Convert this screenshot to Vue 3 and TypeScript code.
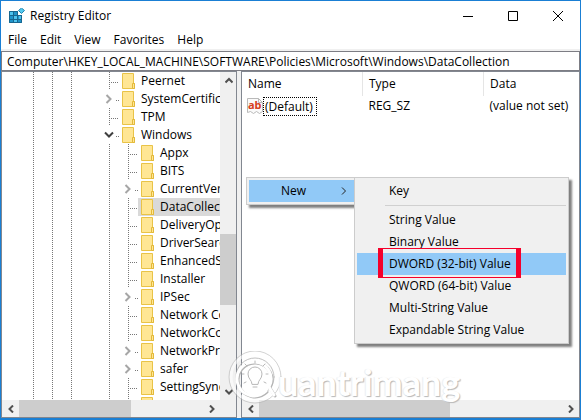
<script setup lang="ts">
import { ref } from 'vue'

interface TreeNode {
  name: string
  depth: 1 | 2
  state: 'leaf' | 'closed' | 'open'
}

const menus: string[] = ['File', 'Edit', 'View', 'Favorites', 'Help']
const address = ref('Computer\\HKEY_LOCAL_MACHINE\\SOFTWARE\\Policies\\Microsoft\\Windows\\DataCollection')
const selected = ref('DataCollection')

const nodes: TreeNode[] = [
  { name: 'Peernet', depth: 1, state: 'leaf' },
  { name: 'SystemCertificates', depth: 1, state: 'closed' },
  { name: 'TPM', depth: 1, state: 'leaf' },
  { name: 'Windows', depth: 1, state: 'open' },
  { name: 'Appx', depth: 2, state: 'leaf' },
  { name: 'BITS', depth: 2, state: 'leaf' },
  { name: 'CurrentVersion', depth: 2, state: 'closed' },
  { name: 'DataCollection', depth: 2, state: 'leaf' },
  { name: 'DeliveryOptimization', depth: 2, state: 'leaf' },
  { name: 'DriverSearching', depth: 2, state: 'leaf' },
  { name: 'EnhancedStorageDevices', depth: 2, state: 'leaf' },
  { name: 'Installer', depth: 2, state: 'leaf' },
  { name: 'IPSec', depth: 2, state: 'closed' },
  { name: 'Network Connections', depth: 2, state: 'leaf' },
  { name: 'NetworkConnectivityStatusIndicator', depth: 2, state: 'leaf' },
  { name: 'NetworkProvider', depth: 2, state: 'closed' },
  { name: 'safer', depth: 2, state: 'closed' },
  { name: 'SettingSync', depth: 2, state: 'leaf' },
  { name: 'System', depth: 2, state: 'leaf' },
]

const valueTypes: string[] = [
  'String Value',
  'Binary Value',
  'DWORD (32-bit) Value',
  'QWORD (64-bit) Value',
  'Multi-String Value',
  'Expandable String Value',
]
const activeType = 'DWORD (32-bit) Value'
</script>

<template>
  <div class="window">
    <header class="titlebar">
      <svg class="app-icon" width="16" height="16" viewBox="0 0 16 16" aria-hidden="true">
        <path d="M0 3h9v4h4v8H0z" fill="#1f93c9" />
        <path d="M1 4h3v3H1zM5 8h4v3H5zM5 12h4v2H5zM10 8h2v3h-2z" fill="#4fc4ee" />
        <path d="M.5 3.500h8v4h4v7H.5zM4.500 3v12M8.500 7v8M0 7.500h13M0 11.500h13" fill="none" stroke="#17668f" />
        <path d="M12.500 0L15.500 2.500L12.500 5.500L9.500 2.500z" fill="#53c9ef" stroke="#2386b1" />
      </svg>
      <h1>Registry Editor</h1>
      <div class="captions">
        <button type="button" aria-label="Minimize">
          <svg width="10" height="10" viewBox="0 0 10 10"><path d="M0 5.500h10" /></svg>
        </button>
        <button type="button" aria-label="Maximize">
          <svg width="10" height="10" viewBox="0 0 10 10"><path d="M.5.5h9v9h-9z" /></svg>
        </button>
        <button type="button" aria-label="Close">
          <svg width="10" height="10" viewBox="0 0 10 10"><path d="M0 0l10 10M10 0L0 10" /></svg>
        </button>
      </div>
    </header>

    <nav class="menubar">
      <button v-for="m in menus" :key="m" type="button">{{ m }}</button>
    </nav>

    <input v-model="address" class="address" type="text" aria-label="Registry path" spellcheck="false" />

    <main class="panes">
      <section class="pane tree-pane">
        <div class="tree-view">
          <ul class="tree">
            <li v-for="n in nodes" :key="n.name">
              <i class="guide line" /><i class="guide line" /><i class="guide line" /><i class="guide" />
              <i v-if="n.depth === 2" class="guide line" />
              <i v-if="n.state === 'leaf'" class="guide line branch" />
              <button v-else type="button" class="guide toggle" :class="n.state" :aria-label="'Toggle ' + n.name">
                <svg v-if="n.state === 'closed'" width="8" height="10" viewBox="0 0 8 10"><path d="M1.500 1l4 4-4 4" /></svg>
                <svg v-else width="10" height="8" viewBox="0 0 10 8"><path d="M1 1.500l4 4 4-4" /></svg>
              </button>
              <button type="button" class="node" :class="{ selected: n.name === selected }" @click="selected = n.name">
                <svg width="13" height="16" viewBox="0 0 13 16" aria-hidden="true">
                  <path d="M.5.5h11v10h1v5H.5z" fill="#ffe694" stroke="#e9c347" />
                  <path d="M10.500 15.500v-5h2v5z" fill="#ffe694" stroke="#e3b93a" />
                </svg>
                <span>{{ n.name }}</span>
              </button>
            </li>
          </ul>
          <div class="vscroll">
            <button type="button" aria-label="Scroll up">
              <svg width="8" height="8" viewBox="0 0 8 8"><path d="M.5 5.500L4 2l3.500 3.500" /></svg>
            </button>
            <div class="track"><div class="thumb" /></div>
            <button type="button" aria-label="Scroll down">
              <svg width="8" height="8" viewBox="0 0 8 8"><path d="M.5 2L4 5.500 7.500 2" /></svg>
            </button>
          </div>
        </div>
        <div class="hscroll">
          <button type="button" aria-label="Scroll left">
            <svg width="8" height="8" viewBox="0 0 8 8"><path d="M6 .5L2.500 4 6 7.500" /></svg>
          </button>
          <div class="track"><div class="thumb tree-thumb" /></div>
          <button type="button" aria-label="Scroll right">
            <svg width="8" height="8" viewBox="0 0 8 8"><path d="M2 .5L5.500 4 2 7.500" /></svg>
          </button>
          <span class="corner" />
        </div>
      </section>

      <section class="pane values-pane">
        <div class="values">
          <table>
            <thead>
              <tr><th>Name</th><th>Type</th><th>Data</th></tr>
            </thead>
            <tbody>
              <tr>
                <td>
                  <div class="value-name">
                    <svg width="16" height="16" viewBox="0 0 16 16" aria-hidden="true">
                      <path d="M.5.5h11l4 4v9l-3 2-3-2-3 2-3-2-3 1z" fill="#fafafa" stroke="#b9b9b9" />
                      <path d="M11.500.5v4h4" fill="none" stroke="#b9b9b9" />
                      <text x="1" y="11" class="ab">ab</text>
                    </svg>
                    <span class="focused">(Default)</span>
                  </div>
                </td>
                <td>REG_SZ</td>
                <td>(value not set)</td>
              </tr>
            </tbody>
          </table>
        </div>
        <div class="hscroll">
          <button type="button" aria-label="Scroll left">
            <svg width="8" height="8" viewBox="0 0 8 8"><path d="M6 .5L2.500 4 6 7.500" /></svg>
          </button>
          <div class="track"><div class="thumb values-thumb" /></div>
          <button type="button" aria-label="Scroll right">
            <svg width="8" height="8" viewBox="0 0 8 8"><path d="M2 .5L5.500 4 2 7.500" /></svg>
          </button>
        </div>
      </section>
    </main>

    <div class="popup context">
      <button type="button" class="active">
        New
        <svg width="6" height="8" viewBox="0 0 6 8"><path d="M1 .5L4.500 4 1 7.500" /></svg>
      </button>
    </div>
    <div class="popup submenu">
      <button type="button">Key</button>
      <hr />
      <button v-for="t in valueTypes" :key="t" type="button" :class="{ active: t === activeType }">{{ t }}</button>
      <span class="marker" />
    </div>

    <div class="watermark">
      <svg width="60" height="56" viewBox="0 0 60 56" aria-hidden="true">
        <g fill="none" stroke-linecap="round">
          <circle cx="27" cy="26" r="24" stroke="#fff" stroke-opacity=".6" stroke-width="3" />
          <circle cx="27" cy="26" r="26" stroke="#b4b4b4" stroke-opacity=".6" />
          <circle cx="27" cy="26" r="19" stroke="#b0b0b0" stroke-opacity=".8" />
          <path d="M38 40a17 17 0 1 1 3-4l5 8" stroke="#b4b4b4" stroke-width="3" transform="translate(1 1)" />
          <path d="M38 40a17 17 0 1 1 3-4l5 8" stroke="#fff" stroke-width="3" />
          <path d="M24 33c0-4-4-5-4-10a7 7 0 0 1 14 0c0 5-4 6-4 10zM25 36h4M27 12v-2M19 15l-2-2M35 15l2-2M16 23h-2M38 23h2M18 31l-2 1M36 31l2 1" stroke="#b8b8b8" />
        </g>
      </svg>
      <span>uantrimang</span>
    </div>
  </div>
</template>

<style>
body {
  margin: 0;
}
</style>

<style scoped>
.window {
  position: relative;
  box-sizing: border-box;
  height: 100vh;
  display: flex;
  flex-direction: column;
  border: 1px solid #1a7fd4;
  border-bottom-width: 2px;
  overflow: hidden;
  background: #fff;
  color: #000;
  font: 12px/18px "Open Sans", "Noto Sans", sans-serif;
}
button {
  border: 0;
  padding: 0;
  margin: 0;
  background: none;
  color: inherit;
  font: inherit;
}
svg {
  flex: none;
  display: block;
}
.titlebar {
  display: flex;
  align-items: center;
  height: 29px;
  padding-left: 8px;
}
h1 {
  flex: 1;
  margin: 0 0 0 5px;
  font-size: 12px;
  line-height: 18px;
  font-weight: 400;
}
.captions {
  display: flex;
}
.captions button {
  width: 45px;
  height: 29px;
  display: grid;
  place-items: center;
}
.captions path {
  fill: none;
  stroke: #000;
}
.menubar {
  display: flex;
  gap: 13px;
  height: 18px;
  padding: 1px 7px 0;
  border-bottom: 2px solid #f0f0f0;
}
.menubar button {
  line-height: 18px;
}
.address {
  box-sizing: border-box;
  width: 100%;
  height: 20px;
  border: 1px solid #7d7d84;
  padding: 0 5px;
  outline: 0;
  background: #fff;
  color: #000;
  font: inherit;
}
.panes {
  flex: 1;
  min-height: 0;
  display: flex;
  gap: 4px;
  background: #f0f0f0;
}
.pane {
  box-sizing: border-box;
  display: flex;
  flex-direction: column;
  min-height: 0;
  border: 1px solid #828790;
  background: #fff;
}
.tree-pane {
  width: 236px;
  flex: none;
}
.values-pane {
  flex: 1;
  min-width: 0;
}
.tree-view {
  flex: 1;
  min-height: 0;
  display: flex;
}
.tree {
  flex: 1;
  min-width: 0;
  margin: 0;
  padding: 0 0 0 22px;
  list-style: none;
  overflow: hidden;
}
.tree li {
  display: flex;
  height: 18px;
}
.guide {
  flex: none;
  width: 19px;
  height: 18px;
}
.line {
  background: repeating-linear-gradient(#777 0 1px, transparent 1px 2px) 9px 0 / 1px 18px no-repeat;
}
.branch {
  background:
    repeating-linear-gradient(#777 0 1px, transparent 1px 2px) 9px 0 / 1px 18px no-repeat,
    repeating-linear-gradient(90deg, #777 0 1px, transparent 1px 2px) 9px 10px / 10px 1px no-repeat;
}
.toggle {
  display: grid;
  place-items: center;
  padding-right: 2px;
  background: repeating-linear-gradient(90deg, #777 0 1px, transparent 1px 2px) 16px 10px / 3px 1px no-repeat;
}
.toggle path {
  fill: none;
  stroke: #a6a6a6;
  stroke-width: 2;
}
.toggle.open path {
  stroke: #404040;
}
.node {
  flex: 1;
  min-width: 0;
  display: flex;
  align-items: center;
  gap: 6px;
  padding-left: 3px;
  overflow: hidden;
  white-space: nowrap;
}
.node.selected {
  background: #d9d9d9;
}
.vscroll {
  width: 16px;
  display: flex;
  flex-direction: column;
  background: #f0f0f0;
}
.vscroll button,
.hscroll button {
  width: 17px;
  height: 17px;
  display: grid;
  place-items: center;
}
.vscroll path,
.hscroll path {
  fill: none;
  stroke: #505050;
  stroke-width: 2;
}
.track {
  flex: 1;
  min-width: 0;
  display: flex;
}
.vscroll .track {
  flex-direction: column;
}
.thumb {
  background: #cdcdcd;
}
.vscroll .thumb {
  height: 24%;
  margin-top: 145px;
}
.hscroll {
  flex: none;
  display: flex;
  height: 17px;
  background: #f0f0f0;
}
.tree-thumb {
  width: 61%;
}
.values-thumb {
  width: 63%;
}
.corner {
  width: 16px;
}
.values {
  flex: 1;
  min-height: 0;
  overflow: hidden;
}
table {
  width: 100%;
  table-layout: fixed;
  border-collapse: collapse;
}
th,
td {
  padding: 0 0 0 6px;
  text-align: left;
  font-weight: 400;
  white-space: nowrap;
}
th {
  height: 24px;
  border-right: 1px solid #e5e5e5;
}
th:first-child,
th:nth-child(2) {
  width: 114px;
}
th:last-child {
  border-right: 0;
}
td {
  height: 20px;
}
td:first-child {
  padding-left: 5px;
}
.value-name {
  display: flex;
  align-items: center;
}
.focused {
  padding: 0 3px 0 1px;
  border: 1px dotted #000;
  line-height: 17px;
}
.ab {
  fill: #d6401c;
  font: 700 11px "Noto Sans", sans-serif;
}
.popup {
  position: absolute;
  box-sizing: border-box;
  padding: 2px;
  border: 1px solid #ccc;
  background: #f0f0f0;
  box-shadow: 3px 3px 2px rgba(0, 0, 0, 0.5);
}
.popup button {
  display: flex;
  align-items: center;
  justify-content: space-between;
  width: 100%;
  height: 22px;
  padding: 0 5px 0 32px;
  white-space: nowrap;
}
.popup .active {
  background: #91c9f7;
}
.popup path {
  fill: none;
  stroke: #222;
}
.context {
  left: 245px;
  top: 176px;
  width: 112px;
}
.submenu {
  left: 353px;
  top: 176px;
  width: 215px;
}
.submenu hr {
  height: 1px;
  margin: 3px 0 3px 28px;
  border: 0;
  background: #d0d0d0;
}
.context button {
  padding-right: 8px;
}
.marker {
  position: absolute;
  left: 23px;
  top: 70px;
  box-sizing: border-box;
  width: 143px;
  height: 30px;
  border: solid #f5002b;
  border-width: 1px 5px;
}
.watermark {
  position: absolute;
  left: 227px;
  top: 350px;
  display: flex;
  pointer-events: none;
}
.watermark span {
  margin: 10px 0 0 -10px;
  color: #fff;
  font: 700 36px/42px Lato, sans-serif;
  text-shadow: 1px 1px 1px #b8b8b8, -1px 0 1px #eee;
}
</style>
